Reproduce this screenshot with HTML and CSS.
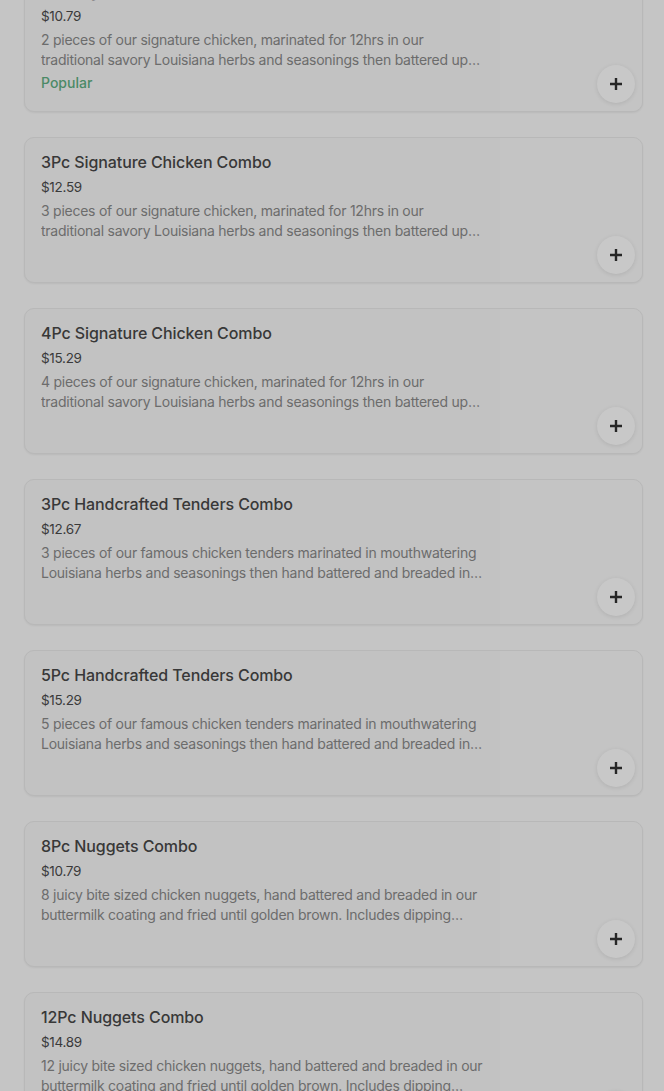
FILE: index.html
```html
<!DOCTYPE html>
<html>
<head>
<meta charset="utf-8">
<link rel="stylesheet" href="styles.css">
</head>
<body>
<div class="list">
  <div class="card">
    <div class="info">
      <div class="title">2Pc Signature Chicken Combo</div>
      <div class="price">$10.79</div>
      <div class="desc">2 pieces of our signature chicken, marinated for 12hrs in our traditional savory Louisiana herbs and seasonings then battered up and fried to a golden crisp. Includes regular side and drink.</div>
      <div class="tag">Popular</div>
    </div>
    <div class="media"><button class="add"><svg viewBox="0 0 14 14" width="14" height="14"><path d="M7 1v12M1 7h12" stroke="#262626" stroke-width="2.4"/></svg></button></div>
  </div>
  <div class="card">
    <div class="info">
      <div class="title">3Pc Signature Chicken Combo</div>
      <div class="price">$12.59</div>
      <div class="desc">3 pieces of our signature chicken, marinated for 12hrs in our traditional savory Louisiana herbs and seasonings then battered up and fried to a golden crisp. Includes regular side and drink.</div>
    </div>
    <div class="media"><button class="add"><svg viewBox="0 0 14 14" width="14" height="14"><path d="M7 1v12M1 7h12" stroke="#262626" stroke-width="2.4"/></svg></button></div>
  </div>
  <div class="card">
    <div class="info">
      <div class="title">4Pc Signature Chicken Combo</div>
      <div class="price">$15.29</div>
      <div class="desc">4 pieces of our signature chicken, marinated for 12hrs in our traditional savory Louisiana herbs and seasonings then battered up and fried to a golden crisp. Includes regular side and drink.</div>
    </div>
    <div class="media"><button class="add"><svg viewBox="0 0 14 14" width="14" height="14"><path d="M7 1v12M1 7h12" stroke="#262626" stroke-width="2.4"/></svg></button></div>
  </div>
  <div class="card">
    <div class="info">
      <div class="title">3Pc Handcrafted Tenders Combo</div>
      <div class="price">$12.67</div>
      <div class="desc">3 pieces of our famous chicken tenders marinated in mouthwatering Louisiana herbs and seasonings then hand battered and breaded in our buttermilk coating. Includes regular side and drink.</div>
    </div>
    <div class="media"><button class="add"><svg viewBox="0 0 14 14" width="14" height="14"><path d="M7 1v12M1 7h12" stroke="#262626" stroke-width="2.4"/></svg></button></div>
  </div>
  <div class="card">
    <div class="info">
      <div class="title">5Pc Handcrafted Tenders Combo</div>
      <div class="price">$15.29</div>
      <div class="desc">5 pieces of our famous chicken tenders marinated in mouthwatering Louisiana herbs and seasonings then hand battered and breaded in our buttermilk coating. Includes regular side and drink.</div>
    </div>
    <div class="media"><button class="add"><svg viewBox="0 0 14 14" width="14" height="14"><path d="M7 1v12M1 7h12" stroke="#262626" stroke-width="2.4"/></svg></button></div>
  </div>
  <div class="card">
    <div class="info">
      <div class="title">8Pc Nuggets Combo</div>
      <div class="price">$10.79</div>
      <div class="desc">8 juicy bite sized chicken nuggets, hand battered and breaded in our buttermilk coating and fried until golden brown. Includes dipping sauce, regular side and drink.</div>
    </div>
    <div class="media"><button class="add"><svg viewBox="0 0 14 14" width="14" height="14"><path d="M7 1v12M1 7h12" stroke="#262626" stroke-width="2.4"/></svg></button></div>
  </div>
  <div class="card">
    <div class="info">
      <div class="title">12Pc Nuggets Combo</div>
      <div class="price">$14.89</div>
      <div class="desc">12 juicy bite sized chicken nuggets, hand battered and breaded in our buttermilk coating and fried until golden brown. Includes dipping sauce, regular side and drink.</div>
    </div>
    <div class="media"><button class="add"><svg viewBox="0 0 14 14" width="14" height="14"><path d="M7 1v12M1 7h12" stroke="#262626" stroke-width="2.4"/></svg></button></div>
  </div>
</div>
</body>
</html>
```
FILE: styles.css
```css
html, body {
  margin: 0;
  padding: 0;
  background: #c5c5c5;
  overflow: hidden;
}
body {
  font-family: "Inter", "Roboto", sans-serif;
}
.list {
  display: flex;
  flex-direction: column;
  gap: 25px;
  padding: 0 21px 0 24px;
  margin-top: -34px;
}
.card {
  display: flex;
  height: 146px;
  box-sizing: border-box;
  border: 1px solid #b8b8b8;
  border-radius: 10px;
  background: #c2c2c2;
  box-shadow: 0 1px 2px rgba(0,0,0,0.06);
  overflow: hidden;
}
.info {
  flex: 0 0 459px;
  box-sizing: border-box;
  padding: 12px 0 0 16px;
  min-width: 0;
}
.title {
  font-size: 16px;
  line-height: 24px;
  font-weight: 500;
  color: #383838;
  letter-spacing: -0.1px;
  white-space: nowrap;
}
.price {
  margin-top: 1px;
  font-size: 13.5px;
  line-height: 24px;
  color: #3a3a3a;
  letter-spacing: -0.3px;
}
.desc {
  margin-top: 2px;
  font-size: 14px;
  line-height: 20px;
  color: #6c6c6c;
  letter-spacing: -0.25px;
  display: -webkit-box;
  -webkit-line-clamp: 2;
  -webkit-box-orient: vertical;
  overflow: hidden;
}
.tag {
  margin-top: 3px;
  font-size: 14px;
  line-height: 20px;
  font-weight: 500;
  color: #4b8a67;
}
.media {
  flex: 1;
  margin-left: 16px;
  position: relative;
  background: #c4c4c4;
}
.add {
  position: absolute;
  right: 7px;
  bottom: 8px;
  width: 38px;
  height: 38px;
  border-radius: 50%;
  border: none;
  background: #c8c8c8;
  box-shadow: 0 1px 4px rgba(0,0,0,0.1);
  padding: 0;
  display: flex;
  align-items: center;
  justify-content: center;
}
.add svg {
  display: block;
}
```
